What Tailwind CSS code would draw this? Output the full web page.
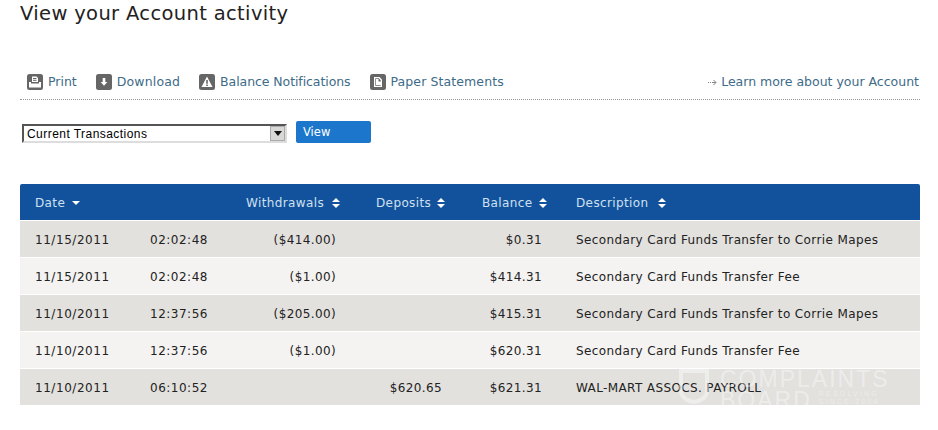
<!DOCTYPE html>
<html lang="en">
<head>
    <meta charset="UTF-8">
    <meta name="viewport" content="width=device-width, initial-scale=1.0">
    <title>View your Account activity</title>
    <script src="https://cdn.jsdelivr.net/npm/@tailwindcss/browser@4"></script>
</head>
<body class="bg-white h-[430px] overflow-hidden font-['DejaVu_Sans',sans-serif] text-[#222]">
    <div class="pl-5 pr-[18px]">
        <h1 class="text-[19.5px] leading-[26px] tracking-[0.35px] text-[#222] h-[59px] pt-px">View your Account activity</h1>

        <!-- toolbar -->
        <div class="flex items-center h-[41px] border-b border-dotted border-[#999] text-[12.5px] text-[#3d6b88] pl-[7px] pt-[6px]">
            <a class="flex items-center gap-[5px] mr-[19px]">
                <svg class="w-4 h-4" viewBox="0 0 16 16"><rect width="16" height="16" rx="2.5" fill="#666"/><path d="M5 2.5h4.5L11 4v4H5z" fill="#fff"/><path d="M6 4.5h3.5M6 6.3h3.5" stroke="#666"/><path d="M2 8h2v1.500h8V8h2v5.500H2z" fill="#fff"/></svg>
                Print
            </a>
            <a class="flex items-center gap-[5px] mr-[19px] tracking-[0.15px]">
                <svg class="w-4 h-4" viewBox="0 0 16 16"><rect width="16" height="16" rx="2.500" fill="#666"/><path d="M6.700 4h2.600v4h2L8 11.700 4.700 8h2z" fill="#fff"/></svg>
                Download
            </a>
            <a class="flex items-center gap-[5px] mr-[19px] tracking-[-0.08px]">
                <svg class="w-4 h-4" viewBox="0 0 16 16"><rect width="16" height="16" rx="2.500" fill="#666"/><path d="M8 2.500 13.500 13h-11z" fill="#fff"/><path d="M7.200 6h1.600v3.800H7.200zM7.200 10.500h1.600V12H7.200z" fill="#666"/></svg>
                Balance Notifications
            </a>
            <a class="flex items-center gap-[5px] tracking-[0.1px]">
                <svg class="w-4 h-4" viewBox="0 0 16 16"><rect width="16" height="16" rx="2.500" fill="#666"/><path d="M4 3h5.500L12 5.500V13H4z" fill="#fff"/><path d="M5.300 4.300h3.500l1.900 1.900v5.500H5.300z" fill="#666"/><path d="M6 5h2.500v2.500H11V11H6z" fill="#fff"/></svg>
                Paper Statements
            </a>
            <a class="ml-auto mr-px flex items-center gap-[4px]">
                <svg class="w-[9px] h-[7px]" viewBox="0 0 9 7" fill="none" stroke="#888"><path d="M0 3.500h1M2 3.500h1M4 3.500h4M5.500 1 8 3.500 5.500 6"/></svg>
                Learn more about your Account
            </a>
        </div>

        <!-- filter -->
        <div class="flex items-start pl-[2px] mt-[24px] gap-[9px]">
            <div class="relative w-[265px] h-[19px]">
                <select class="appearance-none block w-full h-full bg-white border-2 border-t-[#555] border-l-[#555] border-r-[#ddd] border-b-[#ddd] pl-[3px] pt-px text-[12px] leading-[15px] font-['Liberation_Sans',sans-serif] tracking-[0.45px] text-black rounded-none">
                    <option>Current Transactions</option>
                </select>
                <div class="absolute right-[2px] top-[2px] w-[15px] h-[15px] bg-[#d8d8d6] border border-[#aaa] flex items-center justify-center">
                    <svg class="w-[8px] h-[5px]" viewBox="0 0 8 5"><path d="M0 0h8L4 5z" fill="#111"/></svg>
                </div>
            </div>
            <button class="w-[75px] h-[22px] -mt-[3px] bg-[#1b76cc] rounded-[2px] text-white text-[11.500px] leading-[20px] text-left pl-[7px]">View</button>
        </div>

        <!-- transactions -->
        <div class="relative mt-[41px] text-[12px] tracking-[0.38px] w-[900px]">
            <div class="grid grid-cols-[115px_96px_100px_105px_101px_1fr] items-center h-[36px] pl-[15px] pt-[1px] mb-px bg-[#12529c] text-[#cfe0f0] rounded-t-[2px]">
                <div class="flex items-center gap-[7px]">Date <svg class="w-[8px] h-[4px]" viewBox="0 0 8 4"><path d="M0 0h8L4 4z" fill="#fff"/></svg></div>
                <div></div>
                <div class="flex items-center gap-[8px]">Withdrawals <svg class="w-[8px] h-[10px]" viewBox="0 0 8 10"><path d="M0 4 4 0l4 4zM0 6h8l-4 4z" fill="#fff"/></svg></div>
                <div class="flex items-center gap-[6px] pl-[30px]">Deposits <svg class="w-[8px] h-[10px]" viewBox="0 0 8 10"><path d="M0 4 4 0l4 4zM0 6h8l-4 4z" fill="#fff"/></svg></div>
                <div class="flex items-center gap-[6px] pl-[31px]">Balance <svg class="w-[8px] h-[10px]" viewBox="0 0 8 10"><path d="M0 4 4 0l4 4zM0 6h8l-4 4z" fill="#fff"/></svg></div>
                <div class="flex items-center gap-[9px] pl-[24px]">Description <svg class="w-[8px] h-[10px]" viewBox="0 0 8 10"><path d="M0 4 4 0l4 4zM0 6h8l-4 4z" fill="#fff"/></svg></div>
            </div>

            <div class="grid grid-cols-[115px_96px_100px_105px_101px_1fr] items-center h-[36px] pl-[15px] pt-[2px] mb-px bg-[#e2e1de]">
                <div class="tracking-[0.55px]">11/15/2011</div><div class="tracking-[0.5px]">02:02:48</div><div class="text-right pr-[10px]">($414.00)</div><div class="text-right pr-[10px]"></div><div class="text-right pr-[10px]">$0.31</div><div class="pl-[24px]">Secondary Card Funds Transfer to Corrie Mapes</div>
            </div>
            <div class="grid grid-cols-[115px_96px_100px_105px_101px_1fr] items-center h-[36px] pl-[15px] pt-[2px] mb-px bg-[#f4f3f1]">
                <div class="tracking-[0.55px]">11/15/2011</div><div class="tracking-[0.5px]">02:02:48</div><div class="text-right pr-[10px]">($1.00)</div><div class="text-right pr-[10px]"></div><div class="text-right pr-[10px]">$414.31</div><div class="pl-[24px]">Secondary Card Funds Transfer Fee</div>
            </div>
            <div class="grid grid-cols-[115px_96px_100px_105px_101px_1fr] items-center h-[36px] pl-[15px] pt-[2px] mb-px bg-[#e2e1de]">
                <div class="tracking-[0.55px]">11/10/2011</div><div class="tracking-[0.5px]">12:37:56</div><div class="text-right pr-[10px]">($205.00)</div><div class="text-right pr-[10px]"></div><div class="text-right pr-[10px]">$415.31</div><div class="pl-[24px]">Secondary Card Funds Transfer to Corrie Mapes</div>
            </div>
            <div class="grid grid-cols-[115px_96px_100px_105px_101px_1fr] items-center h-[36px] pl-[15px] pt-[2px] mb-px bg-[#f4f3f1]">
                <div class="tracking-[0.55px]">11/10/2011</div><div class="tracking-[0.5px]">12:37:56</div><div class="text-right pr-[10px]">($1.00)</div><div class="text-right pr-[10px]"></div><div class="text-right pr-[10px]">$620.31</div><div class="pl-[24px]">Secondary Card Funds Transfer Fee</div>
            </div>
            <div class="grid grid-cols-[115px_96px_100px_105px_101px_1fr] items-center h-[36px] pl-[15px] pt-[2px] bg-[#e2e1de]">
                <div class="tracking-[0.55px]">11/10/2011</div><div class="tracking-[0.5px]">06:10:52</div><div class="text-right pr-[10px]"></div><div class="text-right pr-[9px]">$620.65</div><div class="text-right pr-[10px]">$621.31</div><div class="pl-[24px]">WAL-MART ASSOCS. PAYROLL</div>
            </div>

            <!-- watermark -->
            <div class="absolute left-[658px] top-[184px] flex items-start gap-[10px] text-white/40 font-['Liberation_Sans',sans-serif] tracking-normal">
                <svg class="w-[32px] h-[37px]" viewBox="0 0 32 37" fill="none" stroke="currentColor" stroke-width="4"><path d="M3 3h26v20c0 6-6 10-13 11C9 33 3 29 3 23z"/></svg>
                <div class="flex flex-col">
                    <span class="text-[23px] leading-[22px] tracking-[2px]">COMPLAINTS</span>
                    <span class="flex items-start gap-[7px] text-[23px] leading-[20px] tracking-[2px]">BOARD
                        <span class="flex flex-col text-[7px] leading-[8px] tracking-[2.200px]"><span>RESOLVING</span><span>SINCE 2004</span></span>
                    </span>
                </div>
            </div>
        </div>
    </div>
</body>
</html>
